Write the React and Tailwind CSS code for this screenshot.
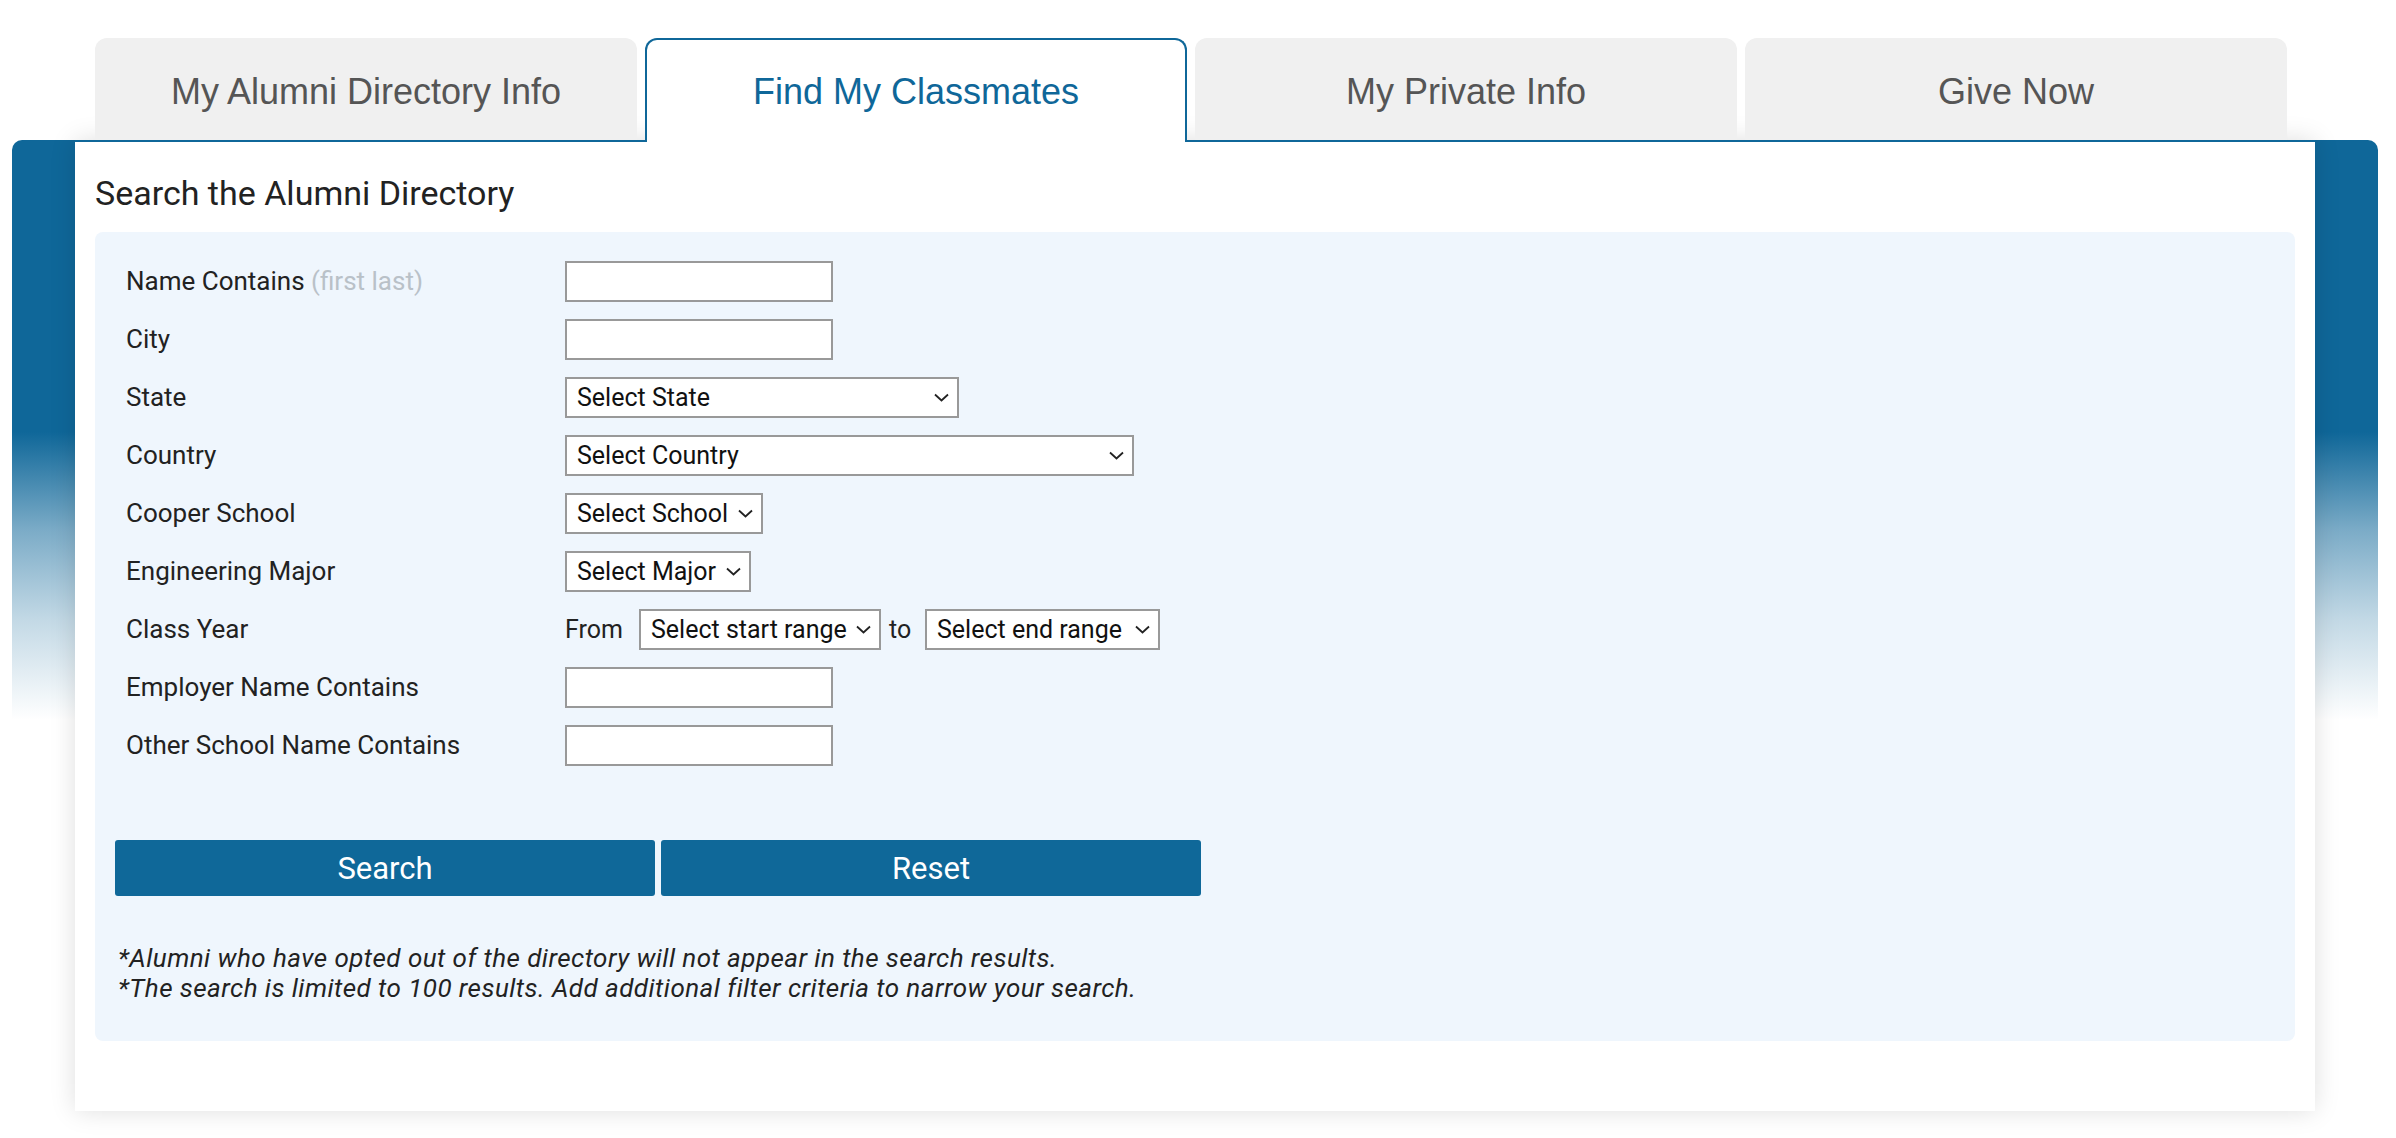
import React from "react";

function Chevron() {
  return (
    <svg width="15" height="9" viewBox="0 0 15 9" className="shrink-0">
      <polyline points="1,1.5 7.5,7.5 14,1.5" fill="none" stroke="#222" strokeWidth="1.8" />
    </svg>
  );
}

function Select({ text, className }) {
  return (
    <div
      className={
        "flex h-[41px] items-center justify-between border-2 border-[#999] bg-white pl-[10px] pr-[8px] text-[25px] text-[#111] " +
        className
      }
    >
      <span className="leading-none">{text}</span>
      <Chevron />
    </div>
  );
}

function TextBox() {
  return <input type="text" className="block h-[41px] w-[268px] border-2 border-[#999] bg-white outline-none" />;
}

function Row({ label, children }) {
  return (
    <div className="flex h-[58px] items-center pl-[11px]">
      <div className="w-[439px] text-[26px] leading-none text-[#222]">{label}</div>
      <div className="flex items-center">{children}</div>
    </div>
  );
}

export default function App() {
  const tabs = ["My Alumni Directory Info", "Find My Classmates", "My Private Info", "Give Now"];
  return (
    <div className="min-h-[1138px] bg-white pt-[38px] font-['Roboto',sans-serif]">
      <div className="relative z-10 flex h-[102px] items-start gap-[8px] pl-[95px]">
        {tabs.map((t, i) =>
          i === 1 ? (
            <div
              key={t}
              className="flex h-[104px] w-[542px] items-center justify-center rounded-t-[12px] border-2 border-b-0 border-[#0f6799] bg-white pt-[2px] font-['Liberation_Sans',Arial,sans-serif] text-[36px] text-[#0f6799]"
            >
              {t}
            </div>
          ) : (
            <div
              key={t}
              className="flex h-[102px] w-[542px] items-center justify-center rounded-t-[12px] bg-[#f0f0f0] pt-[5px] font-['Liberation_Sans',Arial,sans-serif] text-[36px] text-[#555]"
            >
              {t}
            </div>
          )
        )}
      </div>

      <div className="ml-[12px] mr-[18px] rounded-t-[10px] bg-[linear-gradient(to_bottom,#0f6799_0px,#0f6799_292px,rgba(15,103,153,0.55)_390px,rgba(15,103,153,0.25)_480px,rgba(15,103,153,0)_580px)]">
        <div className="mx-[63px] border-t-2 border-[#0f6799] bg-white px-[20px] pt-[31px] pb-[70px] shadow-[0_0_24px_rgba(0,0,0,0.13)]">
          <h1 className="text-[34px] font-normal leading-[40px] text-[#222]">Search the Alumni Directory</h1>

          <div className="mt-[19px] rounded-[8px] bg-[#eff6fd] px-[20px] pt-[20px] pb-[38px]">
            <Row
              label={
                <>
                  Name Contains <span className="text-[#b9c1c8]">(first last)</span>
                </>
              }
            >
              <TextBox />
            </Row>
            <Row label="City">
              <TextBox />
            </Row>
            <Row label="State">
              <Select text="Select State" className="w-[394px]" />
            </Row>
            <Row label="Country">
              <Select text="Select Country" className="w-[569px]" />
            </Row>
            <Row label="Cooper School">
              <Select text="Select School" className="w-[198px]" />
            </Row>
            <Row label="Engineering Major">
              <Select text="Select Major" className="w-[186px]" />
            </Row>
            <Row label="Class Year">
              <span className="w-[74px] text-[25px] leading-none text-[#222]">From</span>
              <Select text="Select start range" className="w-[242px]" />
              <span className="w-[44px] pl-[8px] text-[25px] leading-none text-[#222]">to</span>
              <Select text="Select end range" className="w-[235px]" />
            </Row>
            <Row label="Employer Name Contains">
              <TextBox />
            </Row>
            <Row label="Other School Name Contains">
              <TextBox />
            </Row>

            <div className="mt-[66px] flex gap-[6px]">
              <button className="h-[56px] w-[540px] rounded-[3px] bg-[#0f6899] pt-[2px] text-[31px] text-white">Search</button>
              <button className="h-[56px] w-[540px] rounded-[3px] bg-[#0f6899] pt-[2px] text-[31px] text-white">Reset</button>
            </div>

            <div className="mt-[47px] pl-[3px] text-[26px] italic leading-[30px] tracking-[0.45px] text-[#222]">
              <p>*Alumni who have opted out of the directory will not appear in the search results.</p>
              <p>*The search is limited to 100 results. Add additional filter criteria to narrow your search.</p>
            </div>
          </div>
        </div>
      </div>
    </div>
  );
}
